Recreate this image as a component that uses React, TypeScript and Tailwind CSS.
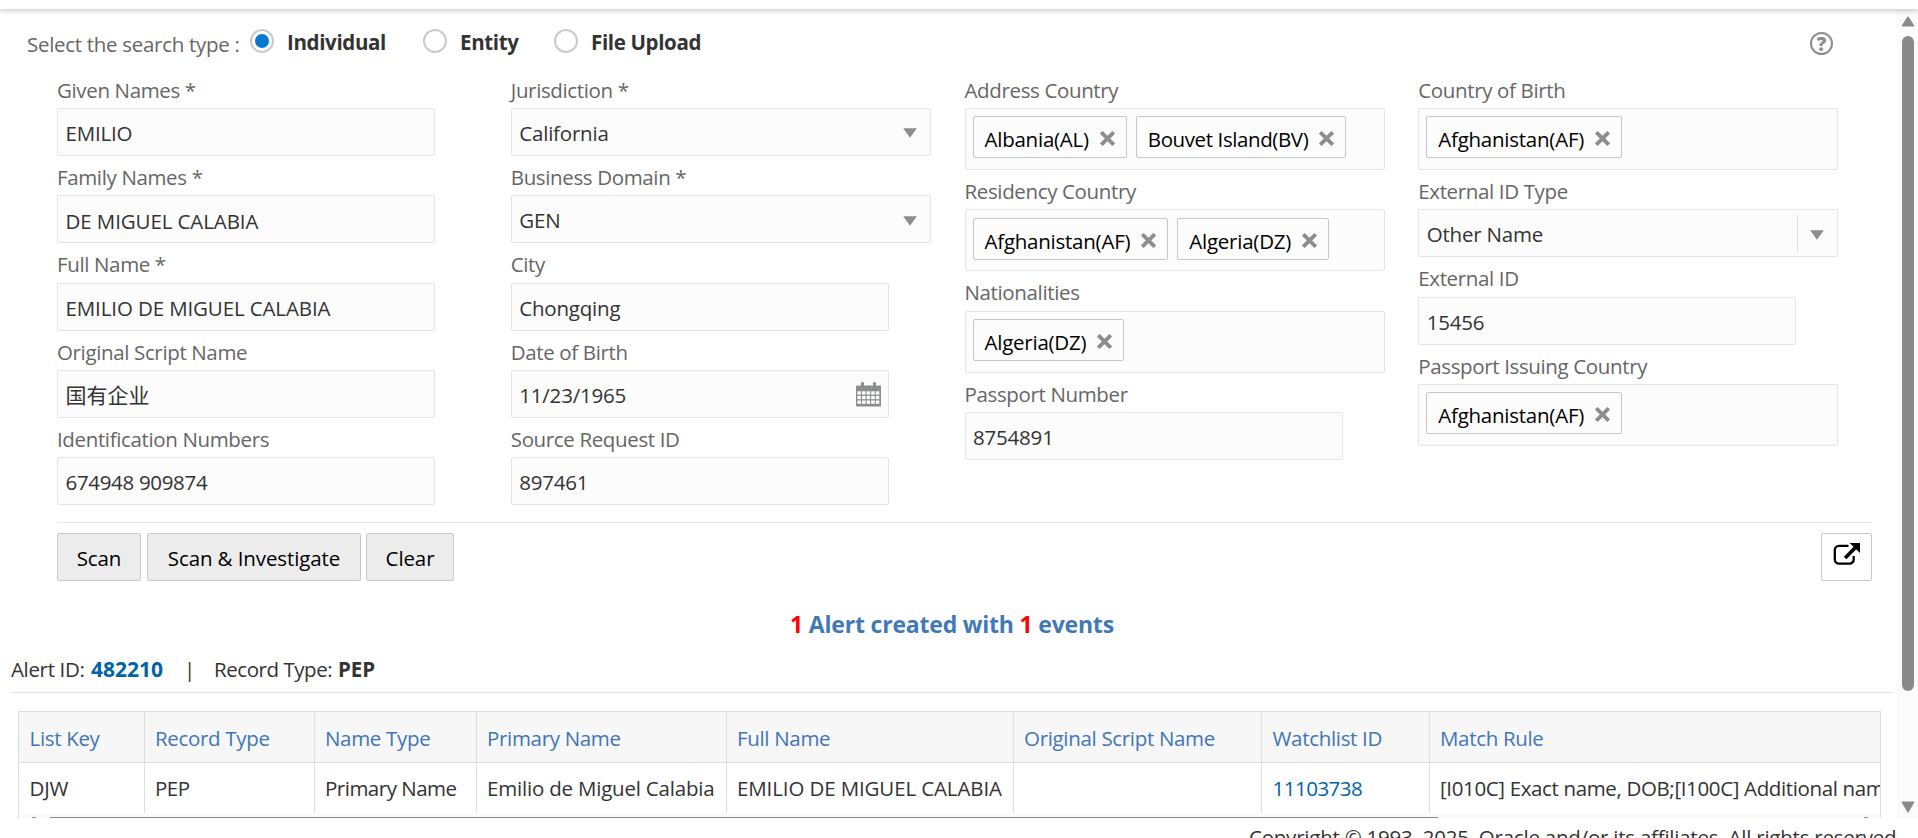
import { useState } from "react";
import type { ReactNode } from "react";
import clsx from "clsx";

const searchTypes = [
  { label: "Individual", className: "w-[136px]" },
  { label: "Entity", className: "w-[94px]" },
  { label: "File Upload", className: "" },
];

const columns = [
  "List Key",
  "Record Type",
  "Name Type",
  "Primary Name",
  "Full Name",
  "Original Script Name",
  "Watchlist ID",
  "Match Rule",
];

const row = [
  { value: "DJW" },
  { value: "PEP", className: "tracking-[-0.5px]" },
  { value: "Primary Name", className: "tracking-[-0.5px]" },
  { value: "Emilio de Miguel Calabia", className: "tracking-[-0.2px]" },
  { value: "EMILIO DE MIGUEL CALABIA", className: "tracking-[-0.12px]" },
  { value: "" },
  { value: "11103738", className: "tracking-[-0.5px] text-[#0063a6]" },
  {
    value: "[I010C] Exact name, DOB;[I100C] Additional name, DOB",
    className: "tracking-[-0.36px]",
  },
];

const Field = ({ label, children }: { label: string; children: ReactNode }) => (
  <div>
    <div className="h-[39.33px] pt-[3px] leading-9 tracking-[-0.36px] text-[#666]">
      {label}
    </div>
    {children}
  </div>
);

const boxClass =
  "flex rounded-xs border border-[#e4e4e4] bg-[#fcfcfc] text-[#333]";

const TextField = ({
  label,
  value,
  icon,
  className,
}: {
  label: string;
  value: string;
  icon?: ReactNode;
  className?: string;
}) => (
  <Field label={label}>
    <div
      className={clsx(
        boxClass,
        "h-12 w-[378px] items-center justify-between pt-[2.4px] pr-[7px] pl-[7.5px]"
      )}
    >
      <span className={className}>{value}</span>
      {icon}
    </div>
  </Field>
);

const Caret = () => (
  <svg width="14" height="10" viewBox="0 0 14 10">
    <path d="M0.2 0.3H13.8L7 9.8Z" fill="#8b8d8f" />
  </svg>
);

const SelectField = ({
  label,
  value,
  divided,
}: {
  label: string;
  value: string;
  divided?: boolean;
}) => (
  <Field label={label}>
    <div
      className={clsx(
        boxClass,
        "h-12 w-[420px] items-center justify-between pr-[13px] pl-[7.5px]"
      )}
    >
      <span className="pt-[2px]">{value}</span>
      <span
        className={clsx(
          "flex h-[37px] items-center pt-[3px] pl-[12.5px]",
          divided && "border-l border-[#e0e0e0]"
        )}
      >
        <Caret />
      </span>
    </div>
  </Field>
);

const Chip = ({ text }: { text: string }) => (
  <div className="flex h-[42px] items-center rounded-xs border border-[#c4c8cb] bg-[#fcfcfc] pt-1 pr-[11px] pl-[11px] text-black">
    <span
      className={clsx("mr-[11px]", text.length > 15 ? "tracking-[-0.4px]" : "tracking-[-0.24px]")}
    >
      {text}
    </span>
    <svg width="15" height="15" viewBox="0 0 15 15" className="mb-[1px]">
      <path d="M1.3 1.3 13.7 13.7M13.7 1.3 1.3 13.7" stroke="#8b8d8f" strokeWidth="3.8" />
    </svg>
  </div>
);

const ChipField = ({ label, values }: { label: string; values: string[] }) => (
  <Field label={label}>
    <div className={clsx(boxClass, "h-[62px] w-[420px] gap-[9px] pt-[7.5px] pl-[7px]")}>
      {values.map((v) => (
        <Chip key={v} text={v} />
      ))}
    </div>
  </Field>
);

const CalendarIcon = () => (
  <svg width="25" height="25" viewBox="0 0 25 25" className="mb-[2px]">
    <path
      d="M5 0.3h3v3.2h9V0.3h3v3.2h4a1 1 0 0 1 1 1V23.5a1 1 0 0 1-1 1H1a1 1 0 0 1-1-1V4.5a1 1 0 0 1 1-1H5Z"
      fill="#8b8d8f"
    />
    {[9.3, 13.9, 18.5].map((y) =>
      [1.4, 6, 10.6, 15.2, 19.8].map((x) => (
        <rect key={`${x}-${y}`} x={x} y={y} width="3.5" height="3.3" fill="#fff" />
      ))
    )}
  </svg>
);

const PopOutIcon = () => (
  <svg width="27" height="22" viewBox="0 0 27 22" fill="none">
    <path
      d="M15.5 2.9H6a4.2 4.2 0 0 0-4.2 4.2v9.3a4.2 4.2 0 0 0 4.2 4.2h10.5a4.2 4.2 0 0 0 4.2-4.2V13"
      stroke="#000"
      strokeWidth="2.3"
    />
    <path d="M12.1 14.9 23 4" stroke="#000" strokeWidth="3.6" />
    <path d="M16.6 0H27V10Z" fill="#000" />
  </svg>
);

const Button = ({ className, children }: { className: string; children: ReactNode }) => (
  <button
    className={clsx(
      "h-12 rounded-xs border border-[#c9c9c9] bg-[#ececec] pt-[3px] tracking-[-0.1px] text-black",
      className
    )}
  >
    {children}
  </button>
);

const gridCols =
  "grid grid-cols-[125.5px_170px_162px_250px_287px_248.5px_167.5px_450.5px] whitespace-nowrap";

export default function App() {
  const [searchType, setSearchType] = useState("Individual");

  return (
    <div className="flex h-[838px] w-[1918px] flex-col overflow-hidden bg-white font-['Open_Sans','Noto_Sans_CJK_SC',sans-serif] text-[20.5px] leading-9 tracking-[-0.2px] text-[#333]">
      <header className="relative z-10 h-[9px] shrink-0 bg-white shadow-[0_2px_5px_rgba(0,0,0,0.2)]" />
      <div className="flex h-[809px] shrink-0">
        <main className="w-[1897px] overflow-hidden">
          <div className="flex h-[59.67px] pl-[27px]">
            <div className="mt-[17px] w-[223px] tracking-[-0.3px] text-[#666]">
              Select the search type :
            </div>
            {searchTypes.map(({ label, className }) => (
              <label key={label} className="flex">
                <input
                  type="radio"
                  className="sr-only"
                  checked={searchType === label}
                  onChange={() => setSearchType(label)}
                />
                <span className="mt-5 mr-[13px] flex size-6 items-center justify-center rounded-full border-2 border-[#c8cbce]">
                  {searchType === label && (
                    <span className="size-3.5 rounded-full bg-[#0579cd]" />
                  )}
                </span>
                <span className={clsx("mt-[15px] font-bold tracking-[-0.35px]", className)}>
                  {label}
                </span>
              </label>
            ))}
            <div className="mt-[23px] mr-[64px] ml-auto flex size-[23px] items-center justify-center rounded-full border-2 border-[#8b8d8f] text-[19px] font-extrabold text-[#8b8d8f]">
              ?
            </div>
          </div>

          <div className="ml-[57px] w-[1815px]">
            <div className="grid h-[454px] grid-cols-4 border-b border-[#e2e2e2]">
              <div>
                <TextField label="Given Names *" value="EMILIO" />
                <TextField
                  label="Family Names *"
                  value="DE MIGUEL CALABIA"
                  className="tracking-[-0.1px]"
                />
                <TextField
                  label="Full Name *"
                  value="EMILIO DE MIGUEL CALABIA"
                  className="tracking-[-0.12px]"
                />
                <TextField
                  label="Original Script Name"
                  value="国有企业"
                  className="text-[21px] tracking-normal"
                />
                <TextField
                  label="Identification Numbers"
                  value="674948 909874"
                  className="tracking-[-0.32px]"
                />
              </div>
              <div>
                <SelectField label="Jurisdiction *" value="California" />
                <SelectField label="Business Domain *" value="GEN" />
                <TextField label="City" value="Chongqing" />
                <TextField label="Date of Birth" value="11/23/1965" icon={<CalendarIcon />} />
                <TextField label="Source Request ID" value="897461" />
              </div>
              <div>
                <ChipField label="Address Country" values={["Albania(AL)", "Bouvet Island(BV)"]} />
                <ChipField label="Residency Country" values={["Afghanistan(AF)", "Algeria(DZ)"]} />
                <ChipField label="Nationalities" values={["Algeria(DZ)"]} />
                <TextField label="Passport Number" value="8754891" />
              </div>
              <div>
                <ChipField label="Country of Birth" values={["Afghanistan(AF)"]} />
                <SelectField label="External ID Type" value="Other Name" divided />
                <TextField label="External ID" value="15456" />
                <ChipField label="Passport Issuing Country" values={["Afghanistan(AF)"]} />
              </div>
            </div>
            <div className="flex pt-2.5">
              <Button className="mr-1.5 w-[84px]">Scan</Button>
              <Button className="mr-[5px] w-[214px]">Scan &amp; Investigate</Button>
              <Button className="w-[88px]">Clear</Button>
              <button className="ml-auto flex h-12 w-[51px] justify-center rounded-xs border border-[#c4c8cb] bg-white pt-[9px]">
                <PopOutIcon />
              </button>
            </div>
          </div>

          <section className="ml-[11px] w-[1882px]">
            <h2 className="mt-[25px] text-center text-[23px] leading-9 font-bold tracking-[-0.2px] text-[#3f79b7]">
              <span className="text-[#f00]">1</span> Alert created with{" "}
              <span className="text-[#f00]">1</span> events
            </h2>
            <div className="mt-[9px] flex h-[42px] border-b border-[#e2e2e2]">
              <span className="w-[80px] tracking-[-0.35px]">Alert ID:</span>
              <b className="w-[93px] text-[21px] tracking-normal text-[#0063a6]">482210</b>
              <span className="w-[30px]">|</span>
              <span className="w-[124px] tracking-[-0.45px]">Record Type:</span>
              <b className="tracking-[-0.1px]">PEP</b>
            </div>
            <div className="mt-[18px] ml-[7px] h-[107px] w-[1863px] overflow-hidden border-x border-t border-[#dedede]">
              <div className={clsx(gridCols, "h-[51px] border-b border-[#dedede] bg-[#f7f7f7]")}>
                {columns.map((c) => (
                  <div
                    key={c}
                    className="border-[#dedede] pt-2 pl-[10.5px] tracking-[-0.32px] text-[#3f76b6] not-last:border-r"
                  >
                    {c}
                  </div>
                ))}
              </div>
              <div className={clsx(gridCols, "h-[50px]")}>
                {row.map(({ value, className }, i) => (
                  <div
                    key={columns[i]}
                    className={clsx(
                      "overflow-hidden border-[#dedede] pt-[7px] pl-[10.5px] not-last:border-r",
                      className
                    )}
                  >
                    {value}
                  </div>
                ))}
              </div>
              <div className="flex h-[5px] items-end bg-[#fbfbfb]">
                <span className="ml-[13px] h-px w-1 bg-[#8a8a8a]" />
                <span className="ml-[14px] h-px w-[1388px] bg-[#8a8a8a]" />
                <span className="mr-3 ml-auto h-px w-1 bg-[#8a8a8a]" />
              </div>
            </div>
          </section>
        </main>

        <div className="flex w-[21px] flex-col items-center bg-[#fbfbfb] pt-[7px] pb-[5px]">
          <svg width="14" height="11" viewBox="0 0 14 11">
            <path d="M7 1.2 12.6 9.8H1.4Z" fill="#8a8a8a" stroke="#8a8a8a" strokeWidth="1.4" strokeLinejoin="round" />
          </svg>
          <div className="mt-[9px] h-[655px] w-3 rounded-full bg-[#8a8a8a]" />
          <svg width="14" height="12" viewBox="0 0 14 12" className="mt-auto">
            <path d="M7 10.8 12.6 1.2H1.4Z" fill="#8a8a8a" stroke="#8a8a8a" strokeWidth="1.4" strokeLinejoin="round" />
          </svg>
        </div>
      </div>
      <footer className="flex h-5 shrink-0 overflow-hidden pt-px pl-[1249px] tracking-[-0.23px] whitespace-nowrap">
        Copyright © 1993, 2025, Oracle and/or its affiliates. All rights reserved.
      </footer>
    </div>
  );
}
